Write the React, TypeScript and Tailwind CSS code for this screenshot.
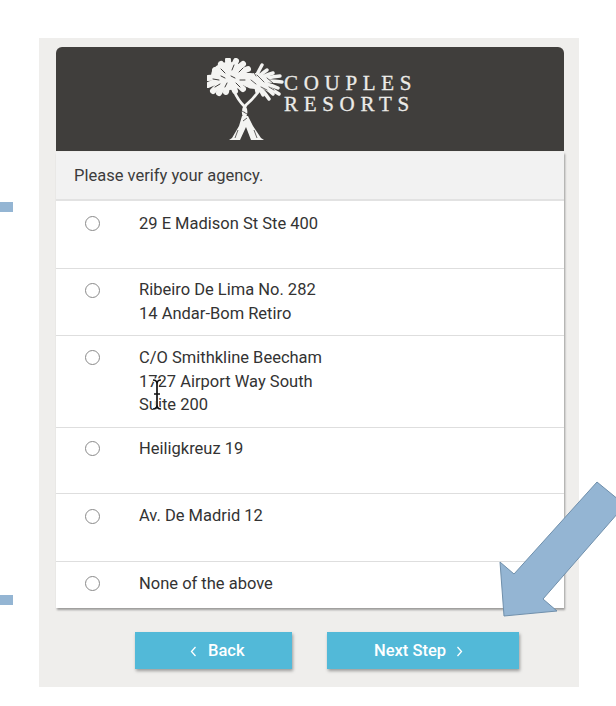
const font = "font-['Roboto',sans-serif]"

const options = [
  { lines: ["29 E Madison St Ste 400"], height: "h-[68px]", pad: "pt-[11px]", radio: "mt-[4px]" },
  { lines: ["Ribeiro De Lima No. 282", "14 Andar-Bom Retiro"], height: "h-[67px]", pad: "pt-[9px]", radio: "mt-[5px]" },
  { lines: ["C/O Smithkline Beecham", "1727 Airport Way South", "Suite 200"], height: "h-[92px]", pad: "pt-[10px]", radio: "mt-[4px]" },
  { lines: ["Heiligkreuz 19"], height: "h-[66px]", pad: "pt-[9px]", radio: "mt-[4px]" },
  { lines: ["Av. De Madrid 12"], height: "h-[68px]", pad: "pt-[10px]", radio: "mt-[5px]" },
  { lines: ["None of the above"], height: "h-[46px]", pad: "pt-[10px]", radio: "mt-[4px]" },
]

// frond tips, fanned out from the middle of each palm crown
const leftFronds = [
  [1, 20], [1, 27], [6, 33], [12, 35], [8, 12], [14, 6], [21, 2], [29, 3], [36, 6], [41, 11], [43, 18], [42, 26], [36, 31], [28, 33], [19, 34],
]
const rightFronds = [
  [55, 7], [60, 12], [66, 15], [73, 18], [75, 24], [71, 30], [72, 36], [66, 36], [62, 41], [56, 37], [50, 34],
]

function Tree() {
  return (
    <svg width="78" height="84" viewBox="0 0 78 84" className="shrink-0 blur-[0.5px]">
      <g stroke="#f4f4f2" strokeLinecap="round" fill="none">
        {leftFronds.map(([x, y], i) => (
          <path key={i} d={`M22 18L${x} ${y}`} strokeWidth="6" />
        ))}
        {rightFronds.map(([x, y], i) => (
          <path key={i} d={`M46 24Q${(x + 46) / 2 + 1} ${(y + 24) / 2 - 2} ${x} ${y}`} strokeWidth="3.4" />
        ))}
      </g>
      <ellipse cx="22" cy="18" rx="18" ry="14" fill="#f4f4f2" />
      <ellipse cx="48" cy="23" rx="13" ry="8" fill="#f4f4f2" />
      <g stroke="#403e3c" strokeLinecap="round" fill="none">
        <path strokeWidth="1" d="M6 21L12 22M8 29L13 26M14 11L18 15M27 7L25 12M36 10L32 14M38 22L33 22M33 29L29 25M18 29L20 25M41 30L44 33M24 18L28 20M14 18L18 20" />
        <path strokeWidth="0.8" d="M50 17L57 24M60 20L66 25M54 29L60 32M62 29L67 32M46 13L49 18M44 22L49 26" />
      </g>
      <g strokeLinecap="round" fill="none" stroke="#f4f4f2">
        <path strokeWidth="2.8" d="M27 33Q31 42 37 48Q41 54 37 60" />
        <path strokeWidth="2.8" d="M52 33Q46 41 39 47Q34 53 38 60" />
      </g>
      <path fill="#f4f4f2" d="M35 58L41 58L46 68L54 80L57 82H44L39 69L33 82H22L25 80L32 68Z" />
      <path stroke="#403e3c" strokeWidth="0.8" fill="none" d="M35 53L40 56M40 60L36 63M31 72L28 80M47 72L50 80M39 72V82" />
    </svg>
  )
}

export default function App() {
  return (
    <div className={`${font} relative w-[616px] h-[706px] bg-white overflow-hidden pt-[38px] pl-[39px]`}>
      <div className="w-[540px] h-[649px] bg-[#efeeec] pt-[9px] pl-[17px]">
        <div className="w-[508px]">
          <div className="h-[104px] bg-[#403e3c] rounded-t-md flex items-start pl-[151px] pt-[11px]">
            <Tree />
            <div className="font-['Liberation_Serif',serif] text-[#ecebe8] text-[21px] leading-[21px] tracking-[5.7px] -ml-[1px] pt-[15px] [-webkit-text-stroke:0.3px_#ecebe8]">
              <div>COUPLES</div>
              <div>RESORTS</div>
            </div>
          </div>
          <div className="bg-white shadow-[1px_2px_2px_rgba(0,0,0,0.35)]">
            <div className="h-[49px] mt-[1px] pt-[2px] bg-[#f2f2f2] border-b-2 border-[#e2e2e2] flex items-center pl-[18px] text-[16.5px] text-[#3c3c3c]">
              Please verify your agency.
            </div>
            {options.map((o, i) => (
              <label key={i} className={`${o.height} ${o.pad} flex items-start pl-[29px] text-[16.5px] leading-[23.5px] text-[#333333] ${i < options.length - 1 ? "border-b border-[#dedede]" : ""}`}>
                <span className={`${o.radio} w-[15px] h-[15px] rounded-full border border-[#8a8a8a] bg-white shrink-0`} />
                <span className="ml-[39px]">
                  {o.lines.map((l) => (
                    <div key={l}>{l}</div>
                  ))}
                </span>
              </label>
            ))}
          </div>
          <div className="flex mt-[24px] ml-[79px] gap-[35px]">
            <button className="w-[157px] h-[37px] pl-[55px] pt-[1px] bg-[#52b9d8] text-white text-[16.5px] font-medium shadow-[1px_2px_3px_rgba(0,0,0,0.35)] flex items-center gap-[11px]">
              <svg width="7" height="11" viewBox="0 0 7 11" fill="none" stroke="white" strokeWidth="1.3"><path d="M5.5 1L1.5 5.5L5.5 10" /></svg>
              Back
            </button>
            <button className="w-[192px] h-[37px] pl-[47px] pt-[1px] bg-[#52b9d8] text-white text-[16.5px] font-medium shadow-[1px_2px_3px_rgba(0,0,0,0.35)] flex items-center gap-[10px]">
              Next Step
              <svg width="7" height="11" viewBox="0 0 7 11" fill="none" stroke="white" strokeWidth="1.3"><path d="M1.5 1L5.5 5.5L1.5 10" /></svg>
            </button>
          </div>
        </div>
      </div>

      {/* pasted annotations over the page */}
      <div className="absolute left-0 top-[202px] w-[13px] h-[10px] bg-[#94b5d3]" />
      <div className="absolute left-0 top-[595px] w-[13px] h-[10px] bg-[#94b5d3]" />
      <svg className="absolute left-[490px] top-[475px]" width="126" height="150" viewBox="490 475 126 150">
        <path d="M597 482L625 505L543 599L557 611L504 616L500 562L514 574Z" fill="#94b5d3" stroke="#6f8fab" strokeWidth="1" />
      </svg>
      {/* text cursor */}
      <svg className="absolute left-[150px] top-[378px]" width="14" height="33" viewBox="0 0 14 33" fill="none">
        <path stroke="white" strokeWidth="3.5" d="M3 2Q7 2 7 6V27Q7 31 3 31M11 2Q7 2 7 6M7 27Q7 31 11 31" />
        <path stroke="#111" strokeWidth="1.7" d="M3 2Q7 2 7 6V27Q7 31 3 31M11 2Q7 2 7 6M7 27Q7 31 11 31M4 16H10" />
      </svg>
    </div>
  )
}
